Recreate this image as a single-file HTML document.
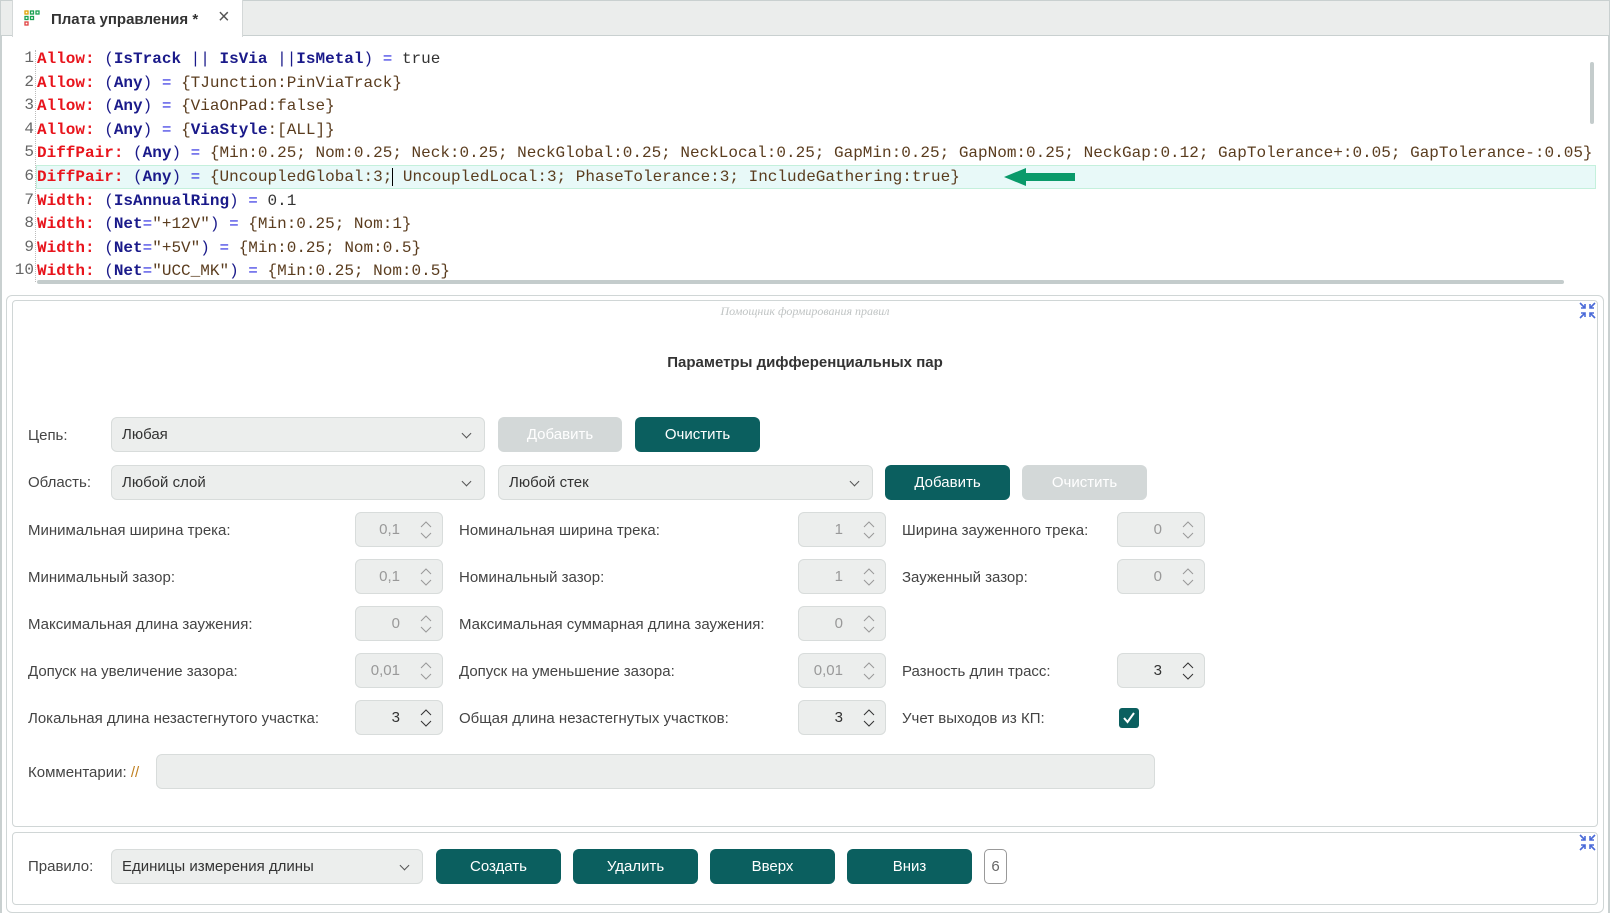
<!DOCTYPE html>
<html><head><meta charset="utf-8"><style>
*{box-sizing:border-box;margin:0;padding:0}
body{width:1610px;height:913px;background:#fff;font-family:"Liberation Sans",sans-serif;position:relative;overflow:hidden;color:#333}
.abs{position:absolute}
.code{font-family:"Liberation Mono",monospace;font-size:16px;white-space:pre;line-height:20px}
.ln{position:absolute;left:0;width:34px;text-align:right;color:#666;font-family:"Liberation Mono",monospace;font-size:16px}
.r{color:#e8141c;font-weight:bold}.k{color:#1a1a8a;font-weight:bold}.p{color:#1a1a8a}.e{color:#2a2ae0}.v{color:#5a3c1e}.t{color:#333}
.lbl{position:absolute;font-size:15px;color:#444;line-height:20px}
.sel{position:absolute;background:#eceeed;border:1px solid #d8dcdb;border-radius:6px;height:35px;font-size:15px;line-height:34px;padding-left:10px;color:#333}
.sel:after{content:"";position:absolute;right:14px;top:12px;width:6px;height:6px;border-right:1.3px solid #555;border-bottom:1.3px solid #555;transform:rotate(45deg)}
.btn{position:absolute;height:35px;border-radius:6px;background:#0b5f5f;color:#fff;font-size:15px;text-align:center;line-height:36px}
.dis{background:#d3d8d8;color:#fff}
.spin{position:absolute;width:88px;height:35px;background:#eceeed;border:1px solid #d8dcdb;border-radius:6px;font-size:15px;line-height:34px;color:#999;text-align:right;padding-right:42px}
.spin.on{color:#333}
.spin svg{position:absolute;right:10px;top:8px}
</style></head><body>
<div class="abs" style="left:0;top:0;width:1610px;height:36px;background:#ebedec;border:1px solid #c9d0d0;border-bottom:1px solid #c9d0d0"></div>
<div class="abs" style="left:12px;top:0;width:231px;height:37px;background:#fff;border-left:1px solid #d4d8d8;border-right:1px solid #d4d8d8"></div>
<svg class="abs" style="left:24px;top:10px" width="16" height="16" viewBox="0 0 16 16"><g fill="none" stroke-width="1.3"><rect x="1" y="1" width="3" height="3" stroke="#e0a000"/><rect x="6.5" y="1" width="3" height="3" stroke="#1aa050"/><rect x="12" y="1" width="3" height="3" stroke="#1aa050"/><rect x="1" y="6.5" width="3" height="3" stroke="#1aa050"/><rect x="6.5" y="6.5" width="3" height="3" stroke="#1aa050"/><rect x="1" y="12" width="3" height="3" stroke="#e04040"/></g></svg>
<div class="abs" style="left:51px;top:11px;font-size:15px;font-weight:bold;color:#333">Плата управления *</div>
<div class="abs" style="left:218px;top:6px;font-size:20px;color:#555">×</div>
<div class="abs" style="left:0;top:36px;width:2px;height:877px;background:#c9d0d0"></div>
<div class="abs" style="right:0;top:36px;width:2px;height:877px;background:#c9d0d0"></div>
<div class="abs" style="left:35px;top:50px;height:232px;border-left:1px dotted #bbb"></div>
<div class="abs" style="left:36px;top:165px;width:1560px;height:24px;background:#e8f9f8;border:1px solid #c4f0dc"></div>
<div class="abs" style="left:0;top:49px;width:1600px">
<div style="position:relative;height:23.6px"><span class="ln">1</span><span class="code abs" style="left:37px"><span class="r">Allow:</span> <span class="p">(</span><span class="k">IsTrack</span> <span class="p">||</span> <span class="k">IsVia</span> <span class="p">||</span><span class="k">IsMetal</span><span class="p">)</span> <span class="e">=</span> <span class="t">true</span></span></div>
<div style="position:relative;height:23.6px"><span class="ln">2</span><span class="code abs" style="left:37px"><span class="r">Allow:</span> <span class="p">(</span><span class="k">Any</span><span class="p">)</span> <span class="e">=</span> <span class="v">{TJunction:PinViaTrack}</span></span></div>
<div style="position:relative;height:23.6px"><span class="ln">3</span><span class="code abs" style="left:37px"><span class="r">Allow:</span> <span class="p">(</span><span class="k">Any</span><span class="p">)</span> <span class="e">=</span> <span class="v">{ViaOnPad:false}</span></span></div>
<div style="position:relative;height:23.6px"><span class="ln">4</span><span class="code abs" style="left:37px"><span class="r">Allow:</span> <span class="p">(</span><span class="k">Any</span><span class="p">)</span> <span class="e">=</span> <span class="v">{<b class="k">ViaStyle</b>:[ALL]}</span></span></div>
<div style="position:relative;height:23.6px"><span class="ln">5</span><span class="code abs" style="left:37px"><span class="r">DiffPair:</span> <span class="p">(</span><span class="k">Any</span><span class="p">)</span> <span class="e">=</span> <span class="v">{Min:0.25; Nom:0.25; Neck:0.25; NeckGlobal:0.25; NeckLocal:0.25; GapMin:0.25; GapNom:0.25; NeckGap:0.12; GapTolerance+:0.05; GapTolerance-:0.05}</span></span></div>
<div style="position:relative;height:23.6px"><span class="ln">6</span><span class="code abs" style="left:37px"><span class="r">DiffPair:</span> <span class="p">(</span><span class="k">Any</span><span class="p">)</span> <span class="e">=</span> <span class="v">{UncoupledGlobal:3;<span style="border-left:1px solid #000"></span> UncoupledLocal:3; PhaseTolerance:3; IncludeGathering:true}</span></span></div>
<div style="position:relative;height:23.6px"><span class="ln">7</span><span class="code abs" style="left:37px"><span class="r">Width:</span> <span class="p">(</span><span class="k">IsAnnualRing</span><span class="p">)</span> <span class="e">=</span> <span class="t">0.1</span></span></div>
<div style="position:relative;height:23.6px"><span class="ln">8</span><span class="code abs" style="left:37px"><span class="r">Width:</span> <span class="p">(</span><span class="k">Net</span><span class="e">=</span><span class="v">"+12V"</span><span class="p">)</span> <span class="e">=</span> <span class="v">{Min:0.25; Nom:1}</span></span></div>
<div style="position:relative;height:23.6px"><span class="ln">9</span><span class="code abs" style="left:37px"><span class="r">Width:</span> <span class="p">(</span><span class="k">Net</span><span class="e">=</span><span class="v">"+5V"</span><span class="p">)</span> <span class="e">=</span> <span class="v">{Min:0.25; Nom:0.5}</span></span></div>
<div style="position:relative;height:23.6px"><span class="ln">10</span><span class="code abs" style="left:37px"><span class="r">Width:</span> <span class="p">(</span><span class="k">Net</span><span class="e">=</span><span class="v">"UCC_MK"</span><span class="p">)</span> <span class="e">=</span> <span class="v">{Min:0.25; Nom:0.5}</span></span></div>
</div>
<svg class="abs" style="left:1004px;top:168px" width="72" height="18"><polygon points="0,9 22,0 22,5 71,5 71,13 22,13 22,18" fill="#0a9a6a"/></svg>
<div class="abs" style="left:37px;top:280px;width:1527px;height:4px;background:#c4cccc;border-radius:2px"></div>
<div class="abs" style="left:1590px;top:62px;width:4px;height:62px;background:#c4cccc;border-radius:2px"></div>
<div class="abs" style="left:6px;top:295px;width:1598px;height:618px;border:1px solid #d0d6d6;border-radius:6px"></div>
<div class="abs" style="left:12px;top:300px;width:1586px;height:527px;border:1px solid #d0d6d6;border-radius:4px"></div>
<div class="abs" style="left:0;top:304px;width:1610px;text-align:center;font-family:'Liberation Serif',serif;font-style:italic;font-size:12px;color:#c0c4c4">Помощник формирования правил</div>
<svg class="abs" style="left:1579px;top:302px" width="17" height="17" viewBox="0 0 17 17" stroke="#4a6ad8" stroke-width="1.6" fill="none"><path d="M1 1L6 6M6 2V6H2M16 1L11 6M11 2V6H15M1 16L6 11M6 15V11H2M16 16L11 11M11 15V11H15"/></svg>
<div class="abs" style="left:0;top:354px;width:1610px;text-align:center;font-size:15px;font-weight:bold;color:#333">Параметры дифференциальных пар</div>
<div class="lbl" style="left:28px;top:426px">Цепь:</div>
<div class="sel" style="left:111px;top:417px;width:374px">Любая</div>
<div class="btn dis" style="left:498px;top:417px;width:124px">Добавить</div>
<div class="btn" style="left:635px;top:417px;width:125px">Очистить</div>
<div class="lbl" style="left:28px;top:473px">Область:</div>
<div class="sel" style="left:111px;top:465px;width:374px">Любой слой</div>
<div class="sel" style="left:498px;top:465px;width:375px">Любой стек</div>
<div class="btn" style="left:885px;top:465px;width:125px">Добавить</div>
<div class="btn dis" style="left:1022px;top:465px;width:125px">Очистить</div>

<div class="lbl" style="left:28px;top:521px">Минимальная ширина трека:</div>
<div class="lbl" style="left:459px;top:521px">Номинальная ширина трека:</div>
<div class="lbl" style="left:902px;top:521px">Ширина зауженного трека:</div>
<div class="lbl" style="left:28px;top:568px">Минимальный зазор:</div>
<div class="lbl" style="left:459px;top:568px">Номинальный зазор:</div>
<div class="lbl" style="left:902px;top:568px">Зауженный зазор:</div>
<div class="lbl" style="left:28px;top:615px">Максимальная длина заужения:</div>
<div class="lbl" style="left:459px;top:615px">Максимальная суммарная длина заужения:</div>
<div class="lbl" style="left:28px;top:662px">Допуск на увеличение зазора:</div>
<div class="lbl" style="left:459px;top:662px">Допуск на уменьшение зазора:</div>
<div class="lbl" style="left:902px;top:662px">Разность длин трасс:</div>
<div class="lbl" style="left:28px;top:709px">Локальная длина незастегнутого участка:</div>
<div class="lbl" style="left:459px;top:709px">Общая длина незастегнутых участков:</div>
<div class="lbl" style="left:902px;top:709px">Учет выходов из КП:</div>

<div class="spin" style="left:355px;top:512px">0,1<svg width="12" height="18"><path d="M1 6L6 1L11 6M1 12L6 17L11 12" stroke="#999" fill="none"/></svg></div>
<div class="spin" style="left:798px;top:512px">1<svg width="12" height="18"><path d="M1 6L6 1L11 6M1 12L6 17L11 12" stroke="#999" fill="none"/></svg></div>
<div class="spin" style="left:1117px;top:512px">0<svg width="12" height="18"><path d="M1 6L6 1L11 6M1 12L6 17L11 12" stroke="#999" fill="none"/></svg></div>
<div class="spin" style="left:355px;top:559px">0,1<svg width="12" height="18"><path d="M1 6L6 1L11 6M1 12L6 17L11 12" stroke="#999" fill="none"/></svg></div>
<div class="spin" style="left:798px;top:559px">1<svg width="12" height="18"><path d="M1 6L6 1L11 6M1 12L6 17L11 12" stroke="#999" fill="none"/></svg></div>
<div class="spin" style="left:1117px;top:559px">0<svg width="12" height="18"><path d="M1 6L6 1L11 6M1 12L6 17L11 12" stroke="#999" fill="none"/></svg></div>
<div class="spin" style="left:355px;top:606px">0<svg width="12" height="18"><path d="M1 6L6 1L11 6M1 12L6 17L11 12" stroke="#999" fill="none"/></svg></div>
<div class="spin" style="left:798px;top:606px">0<svg width="12" height="18"><path d="M1 6L6 1L11 6M1 12L6 17L11 12" stroke="#999" fill="none"/></svg></div>
<div class="spin" style="left:355px;top:653px">0,01<svg width="12" height="18"><path d="M1 6L6 1L11 6M1 12L6 17L11 12" stroke="#999" fill="none"/></svg></div>
<div class="spin" style="left:798px;top:653px">0,01<svg width="12" height="18"><path d="M1 6L6 1L11 6M1 12L6 17L11 12" stroke="#999" fill="none"/></svg></div>
<div class="spin on" style="left:1117px;top:653px">3<svg width="12" height="18"><path d="M1 6L6 1L11 6M1 12L6 17L11 12" stroke="#333" fill="none"/></svg></div>
<div class="spin on" style="left:355px;top:700px">3<svg width="12" height="18"><path d="M1 6L6 1L11 6M1 12L6 17L11 12" stroke="#333" fill="none"/></svg></div>
<div class="spin on" style="left:798px;top:700px">3<svg width="12" height="18"><path d="M1 6L6 1L11 6M1 12L6 17L11 12" stroke="#333" fill="none"/></svg></div>
<svg class="abs" style="left:1119px;top:708px" width="20" height="20"><rect x="0" y="0" width="20" height="20" rx="3" fill="#0b5f5f"/><path d="M5 10L8.5 14L15 5" stroke="#fff" stroke-width="2" fill="none"/></svg>

<div class="lbl" style="left:28px;top:763px">Комментарии: <span style="color:#c08020">//</span></div>
<div class="abs" style="left:156px;top:754px;width:999px;height:35px;background:#eceeed;border:1px solid #d8dcdb;border-radius:6px"></div>

<div class="abs" style="left:12px;top:832px;width:1586px;height:73px;border:1px solid #d0d6d6;border-radius:4px"></div>
<svg class="abs" style="left:1579px;top:834px" width="17" height="17" viewBox="0 0 17 17" stroke="#4a6ad8" stroke-width="1.6" fill="none"><path d="M1 1L6 6M6 2V6H2M16 1L11 6M11 2V6H15M1 16L6 11M6 15V11H2M16 16L11 11M11 15V11H15"/></svg>
<div class="lbl" style="left:28px;top:857px">Правило:</div>
<div class="sel" style="left:111px;top:849px;width:312px">Единицы измерения длины</div>
<div class="btn" style="left:436px;top:849px;width:125px">Создать</div>
<div class="btn" style="left:573px;top:849px;width:125px">Удалить</div>
<div class="btn" style="left:710px;top:849px;width:125px">Вверх</div>
<div class="btn" style="left:847px;top:849px;width:125px">Вниз</div>
<div class="abs" style="left:984px;top:849px;width:23px;height:35px;border:1px solid #999;border-radius:5px;font-size:15px;line-height:34px;text-align:center;color:#666">6</div>
</body></html>
